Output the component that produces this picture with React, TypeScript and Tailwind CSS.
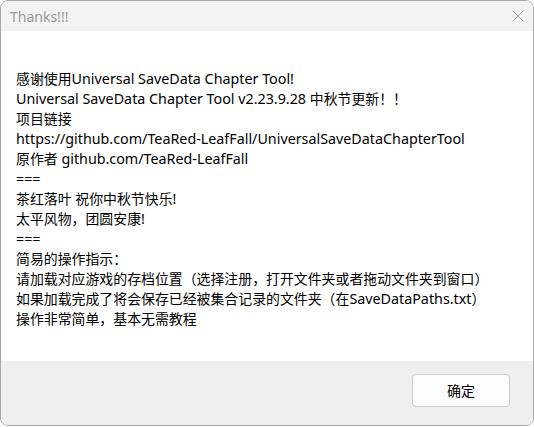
import { X } from 'lucide-react'

const LINES = [
  '感谢使用Universal SaveData Chapter Tool!',
  'Universal SaveData Chapter Tool v2.23.9.28 中秋节更新！！',
  '项目链接',
  'https://github.com/TeaRed-LeafFall/UniversalSaveDataChapterTool',
  '原作者 github.com/TeaRed-LeafFall',
  '===',
  '茶红落叶 祝你中秋节快乐!',
  '太平风物，团圆安康!',
  '===',
  '简易的操作指示：',
  '请加载对应游戏的存档位置（选择注册，打开文件夹或者拖动文件夹到窗口）',
  '如果加载完成了将会保存已经被集合记录的文件夹（在SaveDataPaths.txt）',
  '操作非常简单，基本无需教程',
]

const FONT = "font-['Noto_Sans','Noto_Sans_CJK_SC',sans-serif]"

// CJK glyphs run wider than the latin ones here, so size them separately
function Line({ text }: { text: string }) {
  const parts = text.split(/([\u3000-\u9fff\uff00-\uffef]+)/)
  return (
    <div className="h-[20px] leading-[20px] text-[14.3px] text-black whitespace-pre">
      {parts.map((p, i) =>
        i % 2 === 1 ? (
          <span key={i} className="text-[13.9px]">{p}</span>
        ) : (
          <span key={i}>{p}</span>
        )
      )}
    </div>
  )
}

export default function App() {
  return (
    <div className="w-[534px] h-[427px] bg-white">
      <div className={`w-[534px] h-[426px] flex flex-col overflow-hidden rounded-[8px] border border-[#a8a8a8] ${FONT}`}>
        {/* Title bar */}
        <div className="h-[30px] shrink-0 flex items-center justify-between bg-[#f3f3f3] pl-[9px] pr-[5px]">
          <span className="text-[14px] text-[#9a9a9a] pt-[1px]">Thanks!!!</span>
          <X size={20} strokeWidth={0.7} className="text-[#7a7a7a]" />
        </div>

        {/* Message */}
        <div className="flex-1 bg-white pl-[15px] pt-[38px]">
          {LINES.map((line, i) => (
            <Line key={i} text={line} />
          ))}
        </div>

        {/* Footer */}
        <div className="h-[64px] shrink-0 bg-[#efefef] flex items-start justify-end pr-[23px] pt-[13px]">
          <button className="w-[98px] h-[33px] rounded-[4px] border border-[#cdcdcd] bg-[#fdfdfd] text-[14px] text-black">
            确定
          </button>
        </div>
      </div>
    </div>
  )
}
